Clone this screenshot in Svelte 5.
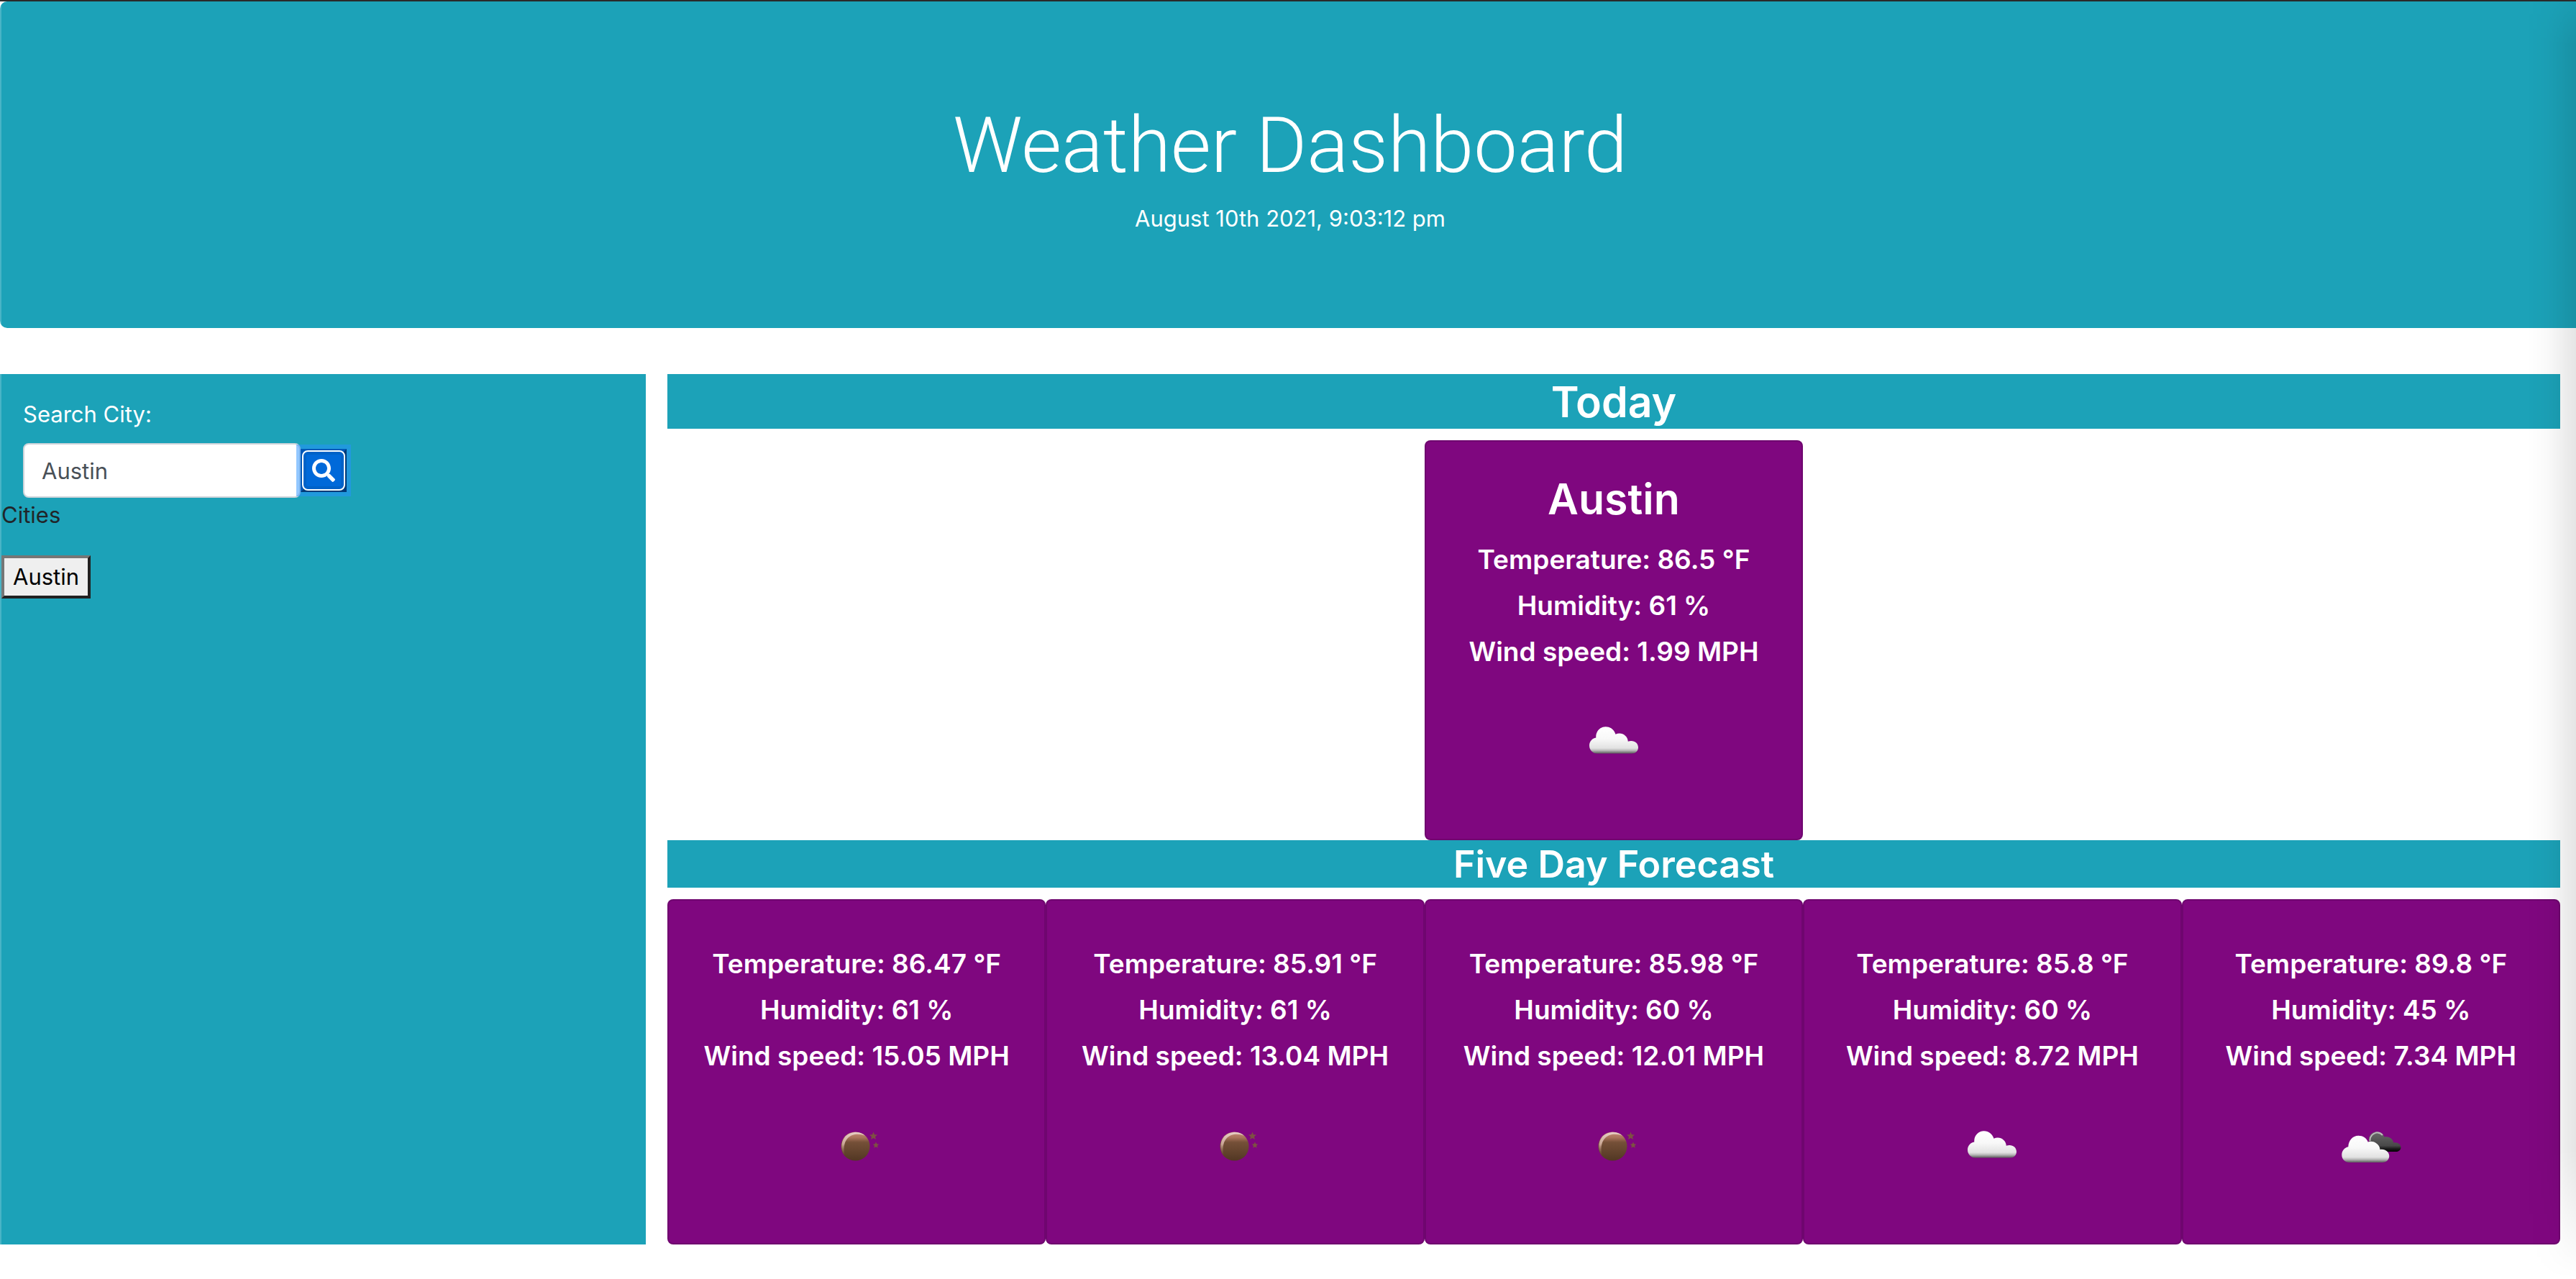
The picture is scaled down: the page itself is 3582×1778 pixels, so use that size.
<script>
  let city = $state('Austin');
  const cities = ['Austin'];
  const today = { name: 'Austin', temp: '86.5', humidity: 61, wind: '1.99', icon: 'cloud' };
  const forecast = [
    { temp: '86.47', humidity: 61, wind: '15.05', icon: 'moon' },
    { temp: '85.91', humidity: 61, wind: '13.04', icon: 'moon' },
    { temp: '85.98', humidity: 60, wind: '12.01', icon: 'moon' },
    { temp: '85.8', humidity: 60, wind: '8.72', icon: 'cloud' },
    { temp: '89.8', humidity: 45, wind: '7.34', icon: 'clouds' }
  ];
</script>

<svg class="defs" aria-hidden="true">
  <defs>
    <linearGradient id="cloud-fill" x1="0" y1="0" x2="0" y2="1">
      <stop offset="0" stop-color="#fff" />
      <stop offset="0.45" stop-color="#f8f8f8" />
      <stop offset="0.8" stop-color="#e2e2e2" />
      <stop offset="0.88" stop-color="#bdbdbd" />
      <stop offset="1" stop-color="#5c5c5c" />
    </linearGradient>
    <linearGradient id="dark-cloud-fill" x1="0" y1="0" x2="0" y2="1">
      <stop offset="0" stop-color="#6a6a6a" />
      <stop offset="0.7" stop-color="#484848" />
      <stop offset="0.85" stop-color="#1c1c1c" />
      <stop offset="1" stop-color="#000" />
    </linearGradient>
    <linearGradient id="moon-fill" x1="0" y1="0" x2="0" y2="1">
      <stop offset="0" stop-color="#c98f78" />
      <stop offset="0.2" stop-color="#a8735a" />
      <stop offset="0.36" stop-color="#755038" />
      <stop offset="1" stop-color="#523723" />
    </linearGradient>
    <linearGradient id="moon-shine" x1="0" y1="0" x2="0" y2="1">
      <stop offset="0" stop-color="#e6cfc6" />
      <stop offset="0.5" stop-color="#c9a594" />
      <stop offset="1" stop-color="#8a6048" stop-opacity="0" />
    </linearGradient>
  </defs>
</svg>

{#snippet weatherIcon(kind)}
  <svg class="weather-icon" viewBox="0 0 100 100" role="img" aria-label={kind}>
    {#if kind === 'cloud'}
      <path
        fill="url(#cloud-fill)"
        d="M27 65.500C20.500 65.500 16 60.500 16 54.500C16 48.500 20 44.500 25.300 43.500C24.500 35 31 28.300 38.700 28.300C45.500 28.300 50.500 32.500 52.500 38.700C60 34.800 69.500 40 69.800 48.700C77.500 46.200 84 50.500 84 57C84 62 80 65.500 75 65.500Z"
      />
    {:else if kind === 'clouds'}
      <g transform="translate(-4 0)">
        <path
          fill="url(#dark-cloud-fill)"
          d="M57 56C53 50 50 43 51.300 37C53.500 31 59 28.800 63.500 29.500C68 30.200 71 32.500 72.500 36.500C79 35 84.500 39 85.300 44.500C91 43.500 95.500 47 95.500 51C95.500 54.500 92.500 57 89 57H58Z"
        />
        <path fill="none" stroke="#bcbcbc" stroke-width="2" d="M52.500 42C52 36 57 30.200 63 30.600C66 30.800 68.500 32.200 70 34" />
        <path
          fill="url(#cloud-fill)"
          d="M24 72C18 72 13.300 67.500 13.300 61.500C13.300 56 17 51.500 22.300 50.300C22.500 41.500 28.500 34.700 36.500 34.700C42.500 34.700 47.700 38 49.700 43.500C57 41 66 46 66.500 54C73.500 52.500 79.300 57.500 79.300 63C79.300 68 75 72 70 72Z"
        />
      </g>
    {:else}
      <circle cx="48.500" cy="49.500" r="20" fill="url(#moon-fill)" />
      <path
        fill="url(#moon-shine)"
        d="M34 63C28 57 27.500 44 33.500 37C40 29 55 27.500 62 35C55 31.500 44 31.500 38 38C32 44 31.500 55 34 63Z"
      />
      <path fill="#7d5043" d="M73.500 29.500L75 33.200L79 33.500L76 36.200L77 40L73.500 38L70 40L71 36.200L68 33.500L72 33.200Z" />
      <path fill="#7d5043" d="M77 43.500L78.300 46.300L81.200 46.700L79 48.800L79.700 51.800L77 50.300L74.300 51.800L75 48.800L72.800 46.700L75.700 46.300Z" />
    {/if}
  </svg>
{/snippet}

{#snippet readings(day)}
  <p class="reading">Temperature: {day.temp} °F</p>
  <p class="reading">Humidity: {day.humidity} %</p>
  <p class="reading">Wind speed: {day.wind} MPH</p>
  {@render weatherIcon(day.icon)}
{/snippet}

<div class="page">
  <header class="jumbotron">
    <h1>Weather Dashboard</h1>
    <p>August 10th 2021, 9:03:12 pm</p>
  </header>

  <div class="layout">
    <aside class="sidebar">
      <form class="search" onsubmit={(e) => e.preventDefault()}>
        <label for="city">Search City:</label>
        <div class="search-row">
          <input id="city" type="text" bind:value={city} />
          <button class="search-button" type="submit" aria-label="Search">
            <svg viewBox="0 0 512 512" aria-hidden="true">
              <path
                fill="currentColor"
                d="M505 442.700L405.300 343c-4.500-4.500-10.600-7-17-7H372c27.600-35.300 44-79.700 44-128C416 93.100 322.900 0 208 0S0 93.100 0 208s93.100 208 208 208c48.300 0 92.700-16.400 128-44v16.300c0 6.400 2.500 12.500 7 17l99.700 99.700c9.400 9.400 24.600 9.400 33.900 0l28.300-28.300c9.400-9.400 9.400-24.600.1-34zM208 336c-70.700 0-128-57.200-128-128 0-70.700 57.200-128 128-128 70.700 0 128 57.200 128 128 0 70.700-57.200 128-128 128z"
              />
            </svg>
          </button>
        </div>
      </form>
      <p class="cities-title">Cities</p>
      {#each cities as name}
        <button class="city-button" type="button" onclick={() => (city = name)}>{name}</button>
      {/each}
    </aside>

    <main>
      <h2 class="today-title">Today</h2>
      <section class="card today-card">
        <h3>{today.name}</h3>
        {@render readings(today)}
      </section>
      <h2 class="forecast-title">Five Day Forecast</h2>
      <div class="forecast">
        {#each forecast as day}
          <section class="card forecast-card">{@render readings(day)}</section>
        {/each}
      </div>
    </main>
  </div>
  <div class="edge-left"></div>
  <div class="edge-right"></div>
</div>

<style>
  :global(body) {
    background: #fff;
    color: #212529;
    font-family: Inter, 'Liberation Sans', sans-serif;
    font-size: 31px;
    line-height: 48px;
  }
  h1, h2, h3, p { margin: 0; font-weight: 400; }
  .defs { position: absolute; width: 0; height: 0; }
  .page {
    position: relative;
    box-sizing: border-box;
    min-height: 100vh;
    border-top: 2px solid #2a2a2a;
  }
  .jumbotron {
    padding: 132px 32px 128px 38px;
    border-radius: 10px 0 0 10px;
    background: #1ca2b8;
    color: #fff;
    text-align: center;
  }
  h1 {
    margin-bottom: 10px;
    font-family: Roboto, Inter, sans-serif;
    font-size: 108px;
    font-weight: 300;
    line-height: 136px;
  }
  .layout {
    display: grid;
    grid-template-columns: 29fr 85fr;
    gap: 30px;
    margin-top: 64px;
    padding-right: 22px;
  }
  .sidebar { background: #1ca2b8; }
  .search { padding: 32px 32px 0; }
  .search label { display: block; margin-bottom: 16px; color: #fff; }
  .search-row { display: flex; align-items: center; }
  #city {
    box-sizing: border-box;
    width: 386px;
    height: 76px;
    padding: 12px 24px;
    border: 2px solid #ced4da;
    border-radius: 8px;
    background: #fff;
    color: #495057;
    font: inherit;
  }
  .search-button {
    position: relative;
    display: grid;
    place-items: center;
    box-sizing: border-box;
    width: 64px;
    height: 60px;
    padding: 0;
    border: 4px solid;
    border-color: #0058b8 #003a78 #003a78 #0058b8;
    border-radius: 0;
    background: #0069d9;
    box-shadow: 0 0 0 6px rgba(38, 143, 255, 0.5);
    color: #fff;
  }
  /* focus ring inside the bevelled border */
  .search-button::after {
    content: '';
    position: absolute;
    inset: -2px;
    border: 2px solid #fff;
    border-radius: 8px;
    box-shadow: inset 0 0 0 4px #0062c8;
  }
  .search-button svg { width: 32px; height: 32px; }
  .cities-title { padding-left: 2px; }
  .city-button {
    margin: 32px 2px;
    padding: 2px 12px;
    border: 4px solid;
    border-color: #767676 #212121 #212121 #767676;
    background: #efefef;
    color: #000;
    font: inherit;
  }
  main { min-width: 0; }
  h2 {
    margin-bottom: 16px;
    padding-top: 2px;
    background: #1ca2b8;
    color: #fff;
    font-weight: 600;
    text-align: center;
  }
  .today-title { font-size: 59px; line-height: 74px; }
  .forecast-title { font-size: 52px; line-height: 64px; }
  .card {
    display: flex;
    flex-direction: column;
    align-items: center;
    box-sizing: border-box;
    border: 2px solid rgba(0, 0, 0, 0.125);
    border-radius: 8px;
    background: #7f077f;
    color: #fff;
    text-align: center;
  }
  .today-card { width: 20%; margin: 0 auto; padding: 40px 0 84px; }
  .forecast { display: grid; grid-template-columns: repeat(5, 1fr); }
  .forecast-card { padding: 64px 0 84px; }
  h3 { margin-bottom: 20px; font-size: 59px; font-weight: 600; line-height: 80px; }
  .reading { margin-bottom: 16px; font-size: 37px; font-weight: 600; line-height: 48px; }
  .weather-icon { width: 100px; height: 100px; margin-top: 36px; }
  .edge-left {
    position: absolute;
    inset: 0 auto 0 0;
    width: 2px;
    background: rgba(255, 255, 255, 0.2);
  }
  .edge-right {
    position: absolute;
    inset: 0 0 0 auto;
    width: 68px;
    background: linear-gradient(to right, transparent, rgba(0, 0, 0, 0.02) 40%, rgba(0, 0, 0, 0.1));
    mask-image: linear-gradient(to bottom, rgba(0, 0, 0, 0.3), #000 60px, #000 calc(100% - 180px), transparent);
    pointer-events: none;
  }
</style>
